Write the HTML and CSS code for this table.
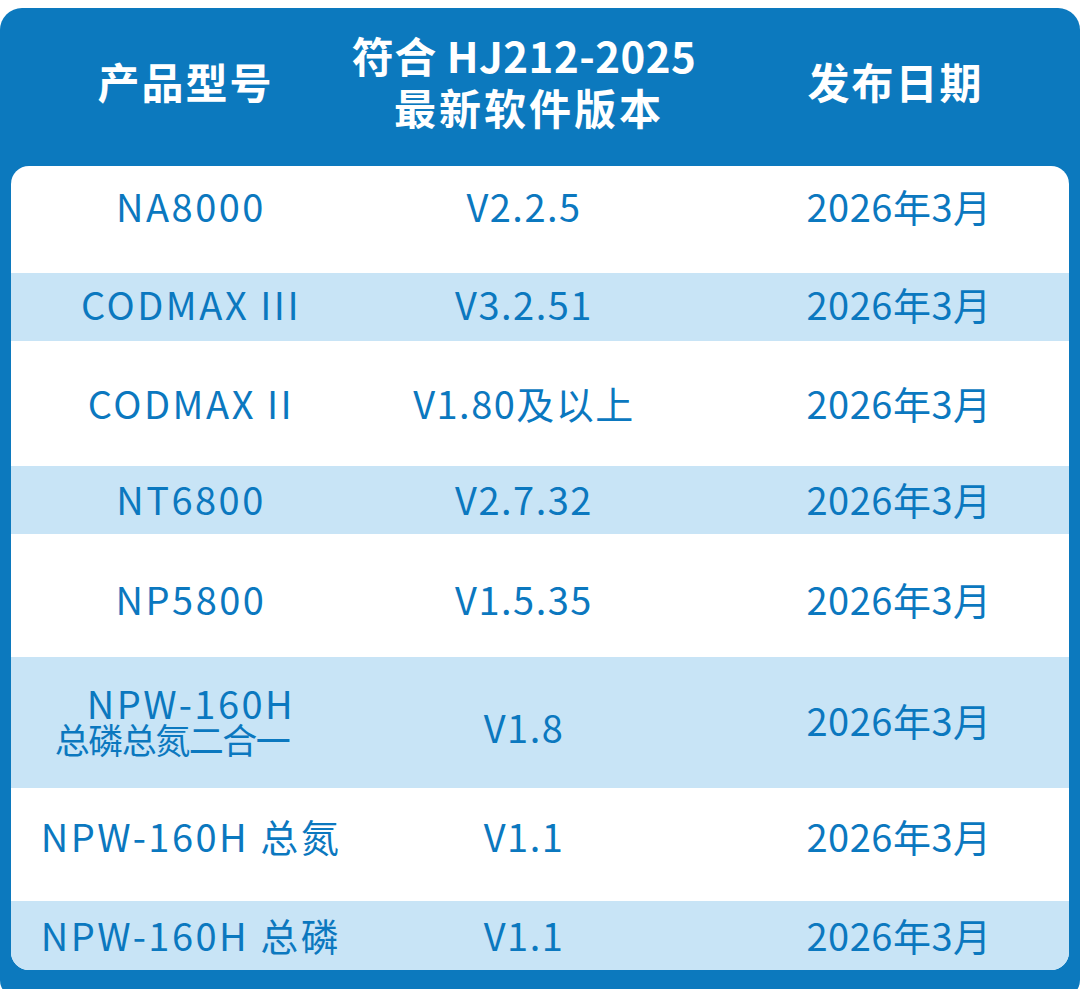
FILE: index.html
```html
<!DOCTYPE html>
<html lang="zh">
<head>
<meta charset="utf-8">
<title>软件版本</title>
<link rel="stylesheet" href="styles.css">
</head>
<body>
<div class="card">
  <div class="head">
    <div class="hcell">产品型号</div>
    <div class="hcell two"><span class="l1">符合 HJ212-2025</span><span class="l2">最新软件版本</span></div>
    <div class="hcell c3">发布日期</div>
  </div>
  <div class="panel">
    <div class="row r1"><div class="cell c1">NA8000</div><div class="cell c2">V2.2.5</div><div class="cell c3">2026年3月</div></div>
    <div class="row alt r2"><div class="cell c1">CODMAX III</div><div class="cell c2">V3.2.51</div><div class="cell c3">2026年3月</div></div>
    <div class="row r3"><div class="cell c1">CODMAX II</div><div class="cell c2">V1.80及以上</div><div class="cell c3">2026年3月</div></div>
    <div class="row alt r4"><div class="cell c1">NT6800</div><div class="cell c2">V2.7.32</div><div class="cell c3">2026年3月</div></div>
    <div class="row r5"><div class="cell c1">NP5800</div><div class="cell c2">V1.5.35</div><div class="cell c3">2026年3月</div></div>
    <div class="row alt r6"><div class="cell c1 twoline"><span class="top">NPW-160H</span><span class="sub">总磷总氮二合一</span></div><div class="cell c2 low">V1.8</div><div class="cell c3">2026年3月</div></div>
    <div class="row r7"><div class="cell c1">NPW-160H 总氮</div><div class="cell c2">V1.1</div><div class="cell c3">2026年3月</div></div>
    <div class="row alt r8"><div class="cell c1">NPW-160H 总磷</div><div class="cell c2">V1.1</div><div class="cell c3">2026年3月</div></div>
  </div>
</div>
</body>
</html>
```

FILE: styles.css
```css
html, body {
  margin: 0;
  padding: 0;
  background: #ffffff;
}
body {
  font-family: "Noto Sans CJK SC", "Noto Sans", sans-serif;
}
.card {
  margin-top: 8px;
  width: 1080px;
  height: 990px;
  background: #0c79be;
  border-radius: 22px 22px 18px 18px;
  display: flex;
  flex-direction: column;
}
.head {
  height: 158px;
  flex: none;
  display: grid;
  grid-template-columns: 371px 306px 403px;
  grid-template-rows: 158px;
  align-items: center;
  color: #ffffff;
  font-weight: 700;
  font-size: 42px;
  letter-spacing: 2px;
}
.hcell {
  text-align: center;
  line-height: 52px;
  padding-bottom: 12px;
  white-space: nowrap;
}
.hcell.two {
  margin: 0 -60px;
  padding-bottom: 12px;
  display: flex;
  flex-direction: column;
  align-items: center;
}
.hcell.two .l1 {
  letter-spacing: 0.5px;
}
.hcell.two .l2 {
  letter-spacing: 3px;
  padding-left: 10px;
}
.hcell.c3 {
  padding-left: 34px;
}
.panel {
  margin: 0 11px;
  height: 804px;
  flex: none;
  background: #ffffff;
  border-radius: 18px;
  overflow: hidden;
  display: flex;
  flex-direction: column;
}
.row {
  display: grid;
  grid-template-columns: 360px 306px 392px;
  align-items: center;
  color: #0b78bf;
  font-size: 38px;
  box-sizing: border-box;
  flex: none;
}
.row.alt {
  background: #c8e4f6;
}
.r1 { height: 107px; padding-bottom: 22px; }
.r2 { height: 68px; }
.r3 { height: 125px; padding-top: 4px; }
.r4 { height: 68px; padding-top: 4px; }
.r5 { height: 123px; padding-top: 12px; }
.r6 { height: 131px; }
.r7 { height: 113px; padding-bottom: 12px; }
.r8 { height: 69px; padding-top: 4px; }
.cell {
  text-align: center;
  line-height: 1.2;
  white-space: nowrap;
  padding-bottom: 6px;
}
.c1 {
  letter-spacing: 2.5px;
}
.c2 {
  letter-spacing: 1.5px;
}
.cell.c3 {
  padding-left: 52px;
  letter-spacing: 0.5px;
}
.twoline {
  line-height: 36px;
  display: flex;
  flex-direction: column;
  align-items: center;
}
.twoline .top {
  padding-top: 2px;
}
.twoline .sub {
  font-size: 35px;
  letter-spacing: -1.5px;
  margin-right: 38px;
}
.low {
  padding-top: 14px;
}
```
